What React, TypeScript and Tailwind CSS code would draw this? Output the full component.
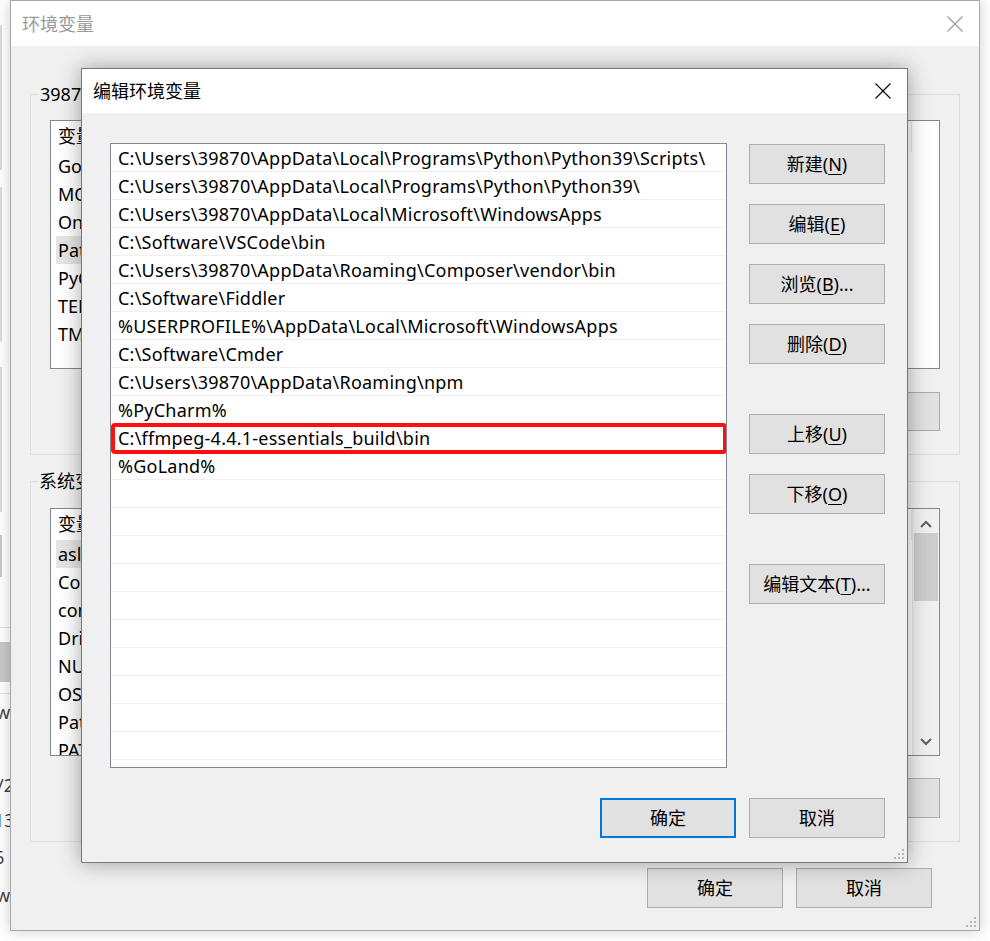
import React from "react";

const FONT = "font-['Noto_Sans','Noto_Sans_CJK_SC',sans-serif]";

const paths = [
  "C:\\Users\\39870\\AppData\\Local\\Programs\\Python\\Python39\\Scripts\\",
  "C:\\Users\\39870\\AppData\\Local\\Programs\\Python\\Python39\\",
  "C:\\Users\\39870\\AppData\\Local\\Microsoft\\WindowsApps",
  "C:\\Software\\VSCode\\bin",
  "C:\\Users\\39870\\AppData\\Roaming\\Composer\\vendor\\bin",
  "C:\\Software\\Fiddler",
  "%USERPROFILE%\\AppData\\Local\\Microsoft\\WindowsApps",
  "C:\\Software\\Cmder",
  "C:\\Users\\39870\\AppData\\Roaming\\npm",
  "%PyCharm%",
  "C:\\ffmpeg-4.4.1-essentials_build\\bin",
  "%GoLand%",
];

const userVars = ["GoLand", "MOZ_PLUGIN_PATH", "OneDrive", "Path", "PyCharm", "TEMP", "TMP"];
const sysVars = ["asl.log", "ComSpec", "configsetroot", "DriverData", "NUMBER_OF_PROCESSORS", "OS", "Path", "PATHEXT"];

function CloseX({ color }: { color: string }) {
  return (
    <svg width="16" height="16" viewBox="0 0 16 16">
      <path d="M0.5 0.5 L15.5 15.5 M15.5 0.5 L0.5 15.5" stroke={color} strokeWidth="1.1" fill="none" />
    </svg>
  );
}

function Grip() {
  return (
    <svg width="10" height="10" viewBox="0 0 10 10">
      <rect x="8" y="0" width="2" height="2" fill="#b5b5b5" />
      <rect x="4" y="4" width="2" height="2" fill="#b5b5b5" />
      <rect x="8" y="4" width="2" height="2" fill="#b5b5b5" />
      <rect x="0" y="8" width="2" height="2" fill="#b5b5b5" />
      <rect x="4" y="8" width="2" height="2" fill="#b5b5b5" />
      <rect x="8" y="8" width="2" height="2" fill="#b5b5b5" />
    </svg>
  );
}

function Btn({ children, primary = false, h = "h-[40px]" }: { children: React.ReactNode; primary?: boolean; h?: string }) {
  return (
    <div
      className={`${h} w-[136px] shrink-0 flex items-center justify-center bg-[#e1e1e1] text-[18px] leading-none text-black ${
        primary ? "border-2 border-[#0078d7]" : "border border-[#adadad]"
      }`}
    >
      {children}
    </div>
  );
}

function U({ children }: { children: React.ReactNode }) {
  return <span className="underline underline-offset-[3px] decoration-1">{children}</span>;
}

function BackList({ names, selected, height, scroll }: { names: string[]; selected: number; height: string; scroll?: boolean }) {
  return (
    <div className={`${height} border border-[#828790] bg-white flex overflow-hidden`}>
      <div className="flex-1 flex flex-col">
        <div className="h-[31px] shrink-0 flex items-center pl-[7px] text-[18px] relative">
          <span>变量</span>
          <span className="ml-[330px]">值</span>
          <div className="absolute right-0 top-[1px] h-[30px] w-px bg-[#e5e5e5]" />
        </div>
        {names.map((n, i) => (
          <div
            key={n}
            className={`h-[28px] shrink-0 mx-[5px] pl-[2px] flex items-center text-[18px] leading-none ${i === selected ? "bg-[#e5e5e5]" : ""}`}
          >
            {n}
          </div>
        ))}
      </div>
      {scroll ? (
        <div className="w-[27px] bg-[#f0f0f0] border-l border-[#e8e8e8] flex flex-col items-center">
          <svg width="12" height="8" viewBox="0 0 12 8" className="mt-[11px]">
            <path d="M1 7 L6 2 L11 7" stroke="#606060" strokeWidth="2" fill="none" />
          </svg>
          <div className="mt-[5px] w-[24px] h-[68px] bg-[#cdcdcd]" />
          <div className="flex-1" />
          <svg width="12" height="8" viewBox="0 0 12 8" className="mb-[9px]">
            <path d="M1 1 L6 6 L11 1" stroke="#606060" strokeWidth="2" fill="none" />
          </svg>
        </div>
      ) : (
        <div className="w-[27px]" />
      )}
    </div>
  );
}

export default function App() {
  const rows = [...paths, ...Array(11).fill("")];
  return (
    <div className={`relative w-[990px] h-[941px] overflow-hidden bg-white text-black ${FONT}`}>
      {/* windows behind, on the left edge */}
      <div className="absolute left-0 top-[25px] w-[2px] h-[145px] bg-[#dcdcdc]" />
      <div className="absolute left-0 top-[187px] w-[2px] h-[155px] bg-[#dcdcdc]" />
      <div className="absolute left-0 top-[367px] w-[2px] h-[145px] bg-[#dcdcdc]" />
      <div className="absolute left-0 top-[535px] w-[2px] h-[42px] bg-[#c8c8c8]" />
      <div className="absolute left-0 top-[627px] w-[10px] h-px bg-[#e0e0e0]" />
      <div className="absolute left-0 top-[642px] w-[10px] h-[40px] bg-[#c9c9c9]" />
      <div className="absolute left-0 top-[693px] w-[10px] h-px bg-[#e0e0e0]" />
      <div className="absolute -left-[4px] top-[700px] text-[18px] leading-[24px] text-[#444]">w</div>
      <div className="absolute -left-[3px] top-[773px] text-[18px] leading-[24px] text-[#444]">/2</div>
      <div className="absolute -left-[6px] top-[808px] text-[18px] leading-[24px] text-[#444]">13</div>
      <div className="absolute -left-[6px] top-[845px] text-[18px] leading-[24px] text-[#444]">6</div>
      <div className="absolute -left-[4px] top-[883px] text-[18px] leading-[24px] text-[#444]">w</div>

      {/* 环境变量 window */}
      <div className="absolute left-[10px] top-0 w-[970px] h-[931px] border border-[#a8a8a8] bg-[#f0f0f0] shadow-[0_0_14px_rgba(0,0,0,0.2)] flex flex-col">
        <div className="h-[45px] shrink-0 bg-white flex items-center justify-between pl-[11px] pr-[16px]">
          <span className="text-[18px] leading-none text-[#999]">环境变量</span>
          <CloseX color="#999" />
        </div>
        <div className="flex-1 flex flex-col">
          <div className="relative mt-[48px] ml-[19px] w-[930px] border border-[#dcdcdc] pt-[25px] px-[19px] pb-[23px]">
            <span className="absolute -top-[13px] left-[8px] bg-[#f0f0f0] px-[1px] text-[18px] leading-[24px]">39870 的用户变量</span>
            <BackList names={userVars} selected={3} height="h-[249px]" />
            <div className="mt-[23px] flex justify-end gap-[13px]">
              <Btn h="h-[39px]">新建(<U>N</U>)...</Btn>
              <Btn h="h-[39px]">编辑(<U>E</U>)...</Btn>
              <Btn h="h-[39px]">删除(<U>D</U>)</Btn>
            </div>
          </div>
          <div className="relative mt-[26px] ml-[19px] w-[930px] border border-[#dcdcdc] pt-[26px] px-[19px] pb-[23px]">
            <span className="absolute -top-[13px] left-[7px] bg-[#f0f0f0] px-[1px] text-[18px] leading-[24px]">系统变量(S)</span>
            <BackList names={sysVars} selected={0} height="h-[248px]" scroll />
            <div className="mt-[22px] flex justify-end gap-[13px]">
              <Btn>新建(<U>W</U>)...</Btn>
              <Btn>编辑(<U>I</U>)...</Btn>
              <Btn>删除(<U>L</U>)</Btn>
            </div>
          </div>
          <div className="mt-[26px] flex justify-end gap-[13px] pr-[47px]">
            <Btn>确定</Btn>
            <Btn>取消</Btn>
          </div>
          <div className="flex-1" />
          <div className="flex justify-end pr-[3px] pb-[3px]">
            <Grip />
          </div>
        </div>
      </div>

      {/* 编辑环境变量 dialog */}
      <div className="absolute left-[81px] top-[68px] w-[827px] h-[795px] border border-[#7a7a7a] bg-[#f0f0f0] shadow-[0_0_20px_rgba(0,0,0,0.35)] flex flex-col">
        <div className="h-[44px] shrink-0 bg-white flex items-center justify-between pl-[11px] pr-[16px]">
          <span className="text-[18px] leading-none">编辑环境变量</span>
          <CloseX color="#000" />
        </div>
        <div className="flex-1 flex flex-col pl-[28px] pr-[22px] pt-[30px]">
          <div className="flex gap-[22px]">
            <div className="w-[617px] h-[625px] shrink-0 border border-[#828790] bg-white overflow-hidden flex flex-col">
              {rows.map((p, i) => (
                <div
                  key={i}
                  className="relative h-[28px] shrink-0 border-b border-[#f0f0f0] pl-[7px] pt-[1px] flex items-center text-[18px] leading-none tracking-[0.24px] whitespace-nowrap"
                >
                  {p}
                  {i === 10 && (
                    <div className="absolute -top-[1px] left-0 -right-[1px] h-[31px] border-4 border-[#ff1010] rounded-[4px]" />
                  )}
                </div>
              ))}
            </div>
            <div className="flex flex-col pt-[1px]">
              <Btn>新建(<U>N</U>)</Btn>
              <div className="mt-[20px]"><Btn>编辑(<U>E</U>)</Btn></div>
              <div className="mt-[20px]"><Btn>浏览(<U>B</U>)...</Btn></div>
              <div className="mt-[20px]"><Btn>删除(<U>D</U>)</Btn></div>
              <div className="mt-[50px]"><Btn>上移(<U>U</U>)</Btn></div>
              <div className="mt-[20px]"><Btn>下移(<U>O</U>)</Btn></div>
              <div className="mt-[50px]"><Btn>编辑文本(<U>T</U>)...</Btn></div>
            </div>
          </div>
          <div className="mt-[30px] flex justify-end gap-[13px]">
            <Btn primary>确定</Btn>
            <Btn>取消</Btn>
          </div>
          <div className="flex-1" />
          <div className="flex justify-end -mr-[19px] pb-[3px]">
            <Grip />
          </div>
        </div>
      </div>
    </div>
  );
}
